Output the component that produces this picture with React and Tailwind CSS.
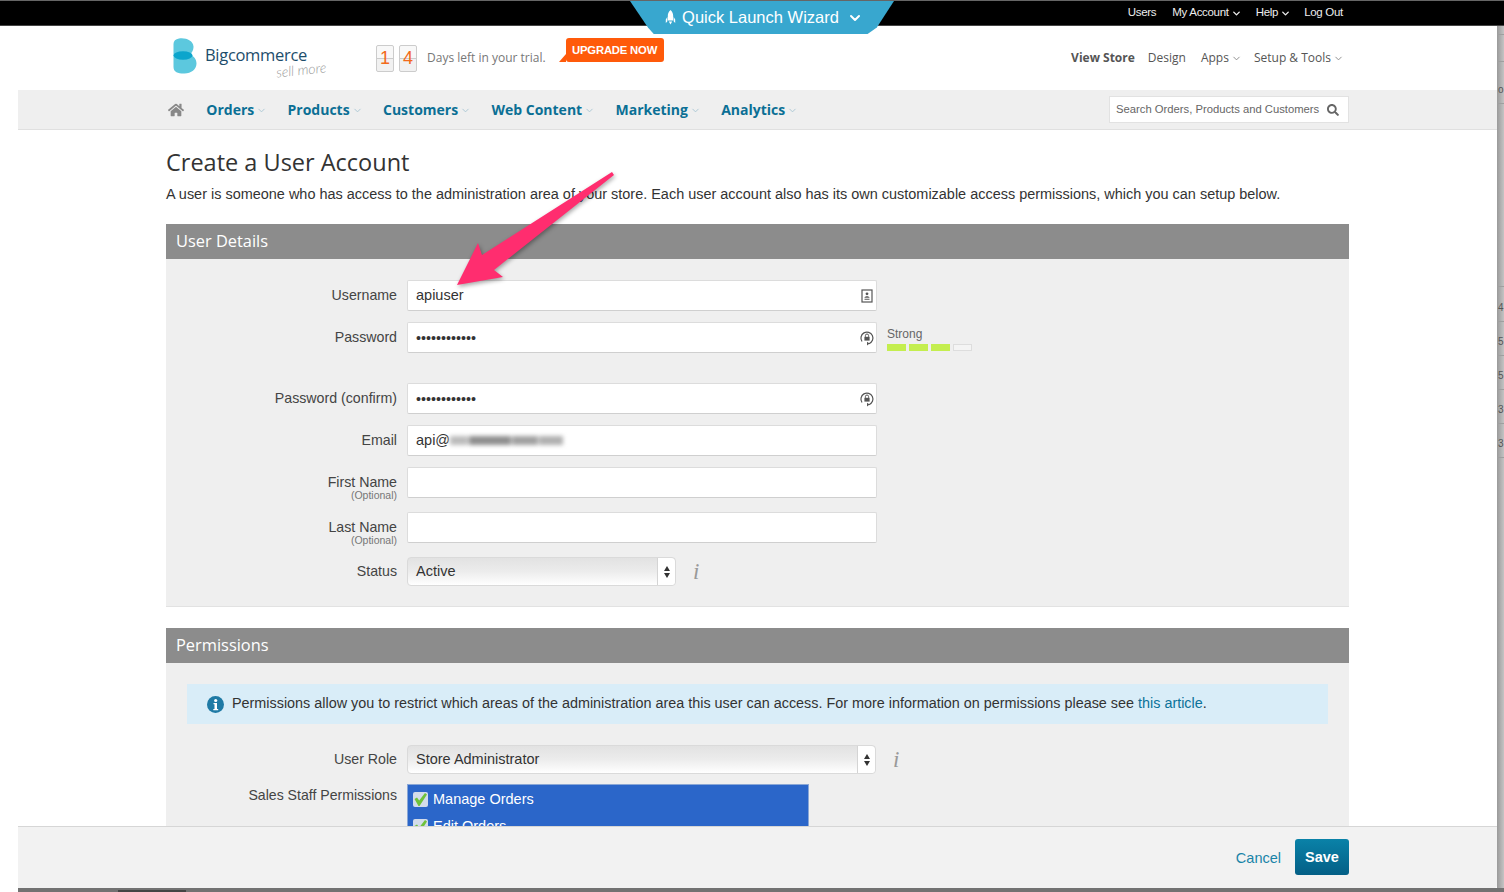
import React from 'react';
import { ChevronDown } from 'lucide-react';
import { FaHome, FaSearch } from 'react-icons/fa';

const helv = 'font-["Liberation_Sans",Arial,sans-serif]';

const stripRows = [
  ['h-[7px]', ''],
  ['h-[27px]', ''],
  ['h-[42px]', 'o'],
  ['h-[183px]', ''],
  ['h-[35px]', '4'],
  ['h-[34px]', '5'],
  ['h-[34px]', '5'],
  ['h-[34px]', '3'],
  ['h-[34px]', '3'],
];

function Caret({ className = '', strokeWidth = 2 }) {
  return <ChevronDown size={11} strokeWidth={strokeWidth} className={className} />;
}

function NavItem({ label }) {
  return (
    <div className="flex items-center gap-[2px]">
      <span className="text-[14px] font-bold text-[#0b6f95]">{label}</span>
      <Caret className="mt-[2px] text-[#a9c6d3]" />
    </div>
  );
}

function Field({ label, optional, height = 'h-[31px]', labelTop = 'pt-[6px]', className = '', children }) {
  return (
    <div className={`flex ${height} ${className}`}>
      <div className={`w-[231px] ${labelTop} text-right text-[14.2px] leading-[18px] text-[#444] ${helv}`}>
        {label}
        {optional && <div className="text-[10.5px] leading-[9px] text-[#777]">(Optional)</div>}
      </div>
      <div className="ml-[10px] flex">{children}</div>
    </div>
  );
}

function TextBox({ value, icon, children }) {
  return (
    <div className={`flex h-[31px] w-[470px] items-center justify-between rounded-[2px] border border-[#dcdcdc] border-b-[#cfcfcf] bg-white pl-[8px] text-[14.5px] text-[#333] ${helv}`}>
      <span className="flex items-center">{value}{children}</span>
      {icon}
    </div>
  );
}

function Dots() {
  return <span className="text-[14.3px] leading-[14px] text-[#333]">••••••••••••</span>;
}

function LockIcon() {
  return (
    <svg width="16" height="16" viewBox="0 0 16 16" className="mr-[1px] text-[#555]">
      <path d="M3 11.5A6 6 0 1 1 10 13.7" fill="none" stroke="currentColor" strokeWidth="1.2" />
      <path d="M8 15.5l2.6-2-2.6-1.8z" fill="currentColor" />
      <rect x="5.4" y="6.8" width="5.2" height="3.8" fill="currentColor" />
      <path d="M6.4 6.8V5.6a1.6 1.6 0 0 1 3.2 0v1.2" fill="none" stroke="currentColor" strokeWidth="1" />
    </svg>
  );
}

function ContactIcon() {
  return (
    <svg width="12" height="14" viewBox="0 0 12 14" className="mr-[3px] text-[#555]">
      <rect x="1" y="1" width="10" height="12" fill="none" stroke="currentColor" strokeWidth="1.2" />
      <circle cx="6" cy="4.8" r="1.4" fill="currentColor" />
      <path d="M3.5 8.8c0-2 5-2 5 0zM3.5 9.8h5v1h-5z" fill="currentColor" />
    </svg>
  );
}

function SelectBox({ value, width }) {
  return (
    <div className={`flex h-[29px] ${width} rounded-[4px] border border-[#dadada] bg-gradient-to-b from-[#e2e2e2] via-[#ececec] to-white text-[14.5px] text-[#333] ${helv}`}>
      <span className="flex-1 pl-[8px] leading-[27px]">{value}</span>
      <span className="flex w-[18px] flex-col items-center justify-center gap-[2px] rounded-r-[4px] border-l border-[#d4d4d4] bg-white">
        <span className="h-0 w-0 border-x-[3.5px] border-b-[5px] border-x-transparent border-b-[#333]" />
        <span className="h-0 w-0 border-x-[3.5px] border-t-[5px] border-x-transparent border-t-[#333]" />
      </span>
    </div>
  );
}

function InfoI() {
  return <span className='ml-[17px] font-["Liberation_Serif",serif] text-[23px] italic leading-[29px] text-[#999]'>i</span>;
}

function Check() {
  return (
    <span className="flex h-[15px] w-[15px] items-center justify-center rounded-[2px] bg-[#d3dcea]">
      <svg width="15" height="15" viewBox="0 0 15 15">
        <path d="M1.5 7l2.500-1.500 2.200 3L12 1l2 1.500-7.500 11.500h-1z" fill="#6fc23a" />
      </svg>
    </span>
  );
}

function SectionHead({ title }) {
  return (
    <div className='flex h-[35px] items-center bg-[#8c8c8c] pl-[10px] font-["Open_Sans",sans-serif] text-[16.4px] text-white'>
      {title}
    </div>
  );
}

export default function App() {
  return (
    <div className="relative h-[892px] w-[1504px] overflow-hidden bg-white">
      {/* black account bar */}
      <div className={`flex h-[26px] items-center justify-end border-t border-b border-t-[#666] border-b-[#444] bg-black pr-[161px] text-[11.5px] tracking-[-0.3px] text-[#eee] ${helv}`}>
        <span className="mr-[16px]">Users</span>
        <span className="mr-[14px] flex items-center gap-[2px]">My Account <Caret strokeWidth={3} /></span>
        <span className="mr-[13px] flex items-center gap-[2px]">Help <Caret strokeWidth={3} /></span>
        <span>Log Out</span>
      </div>

      <div className="flex">
        <div className="w-[18px] shrink-0" />

        <div className="w-[1479px] shrink-0">
          {/* header */}
          <div className="flex h-[64px] pl-[155px] pr-[155px]">
            <svg width="24" height="36" viewBox="0 0 24 36" className="mt-[12px]">
              <path d="M6 .5c7-1 14 2 14.500 8 .2 3.500-1.500 6-3.500 8 4 1.500 6.500 5 6.500 9 0 6-6 10.500-13 10C5 35.500.5 34 .5 29V6C.5 3 2.500 1 6 .5z" fill="#5cc8de" />
              <ellipse cx="10" cy="17.500" rx="9.500" ry="4.200" fill="#0ba5cc" />
            </svg>
            <div className="relative ml-[8px] w-[124px]">
              <div className='mt-[21px] font-["Open_Sans",sans-serif] text-[16.500px] leading-[16px] tracking-[-0.3px] text-[#1d4d6b]'>Bigcommerce</div>
              <div className='absolute left-[71px] top-[37px] -rotate-6 whitespace-nowrap font-["Lato",sans-serif] text-[14px] italic font-light leading-[14px] text-[#999]'>sell more</div>
            </div>
            <div className='ml-[47px] mt-[19px] flex gap-[5px] font-["Liberation_Sans",sans-serif] text-[18px] text-[#f26a1b]'>
              <span className="flex h-[27px] w-[18px] items-center justify-center rounded-[2px] border border-[#ccc] bg-[linear-gradient(#f8f8f8_49%,#ccc_49%,#ccc_52%,#f1f1f1_52%)]">1</span>
              <span className="flex h-[27px] w-[18px] items-center justify-center rounded-[2px] border border-[#ccc] bg-[linear-gradient(#f8f8f8_49%,#ccc_49%,#ccc_52%,#f1f1f1_52%)]">4</span>
            </div>
            <div className='ml-[10px] mt-[21px] font-["Open_Sans",sans-serif] text-[12px] leading-[22px] text-[#777]'>Days left in your trial.</div>
            <div className="relative ml-[20px] mt-[12px] flex h-[24px] w-[98px] items-center justify-center rounded-[3px] bg-[#ff5a0a] pt-[1px] font-['Liberation_Sans',sans-serif] text-[11.300px] font-bold tracking-[-0.2px] text-white">
              UPGRADE NOW
              <span className="absolute -left-[7px] bottom-0 h-0 w-0 border-b-[8px] border-l-[7px] border-b-[#ff5a0a] border-l-transparent" />
            </div>
            <div className='ml-auto mr-[-2px] mt-[21px] flex h-[22px] items-center font-["Open_Sans",sans-serif] text-[12px] text-[#555]'>
              <span className="mr-[13px] font-bold">View Store</span>
              <span className="mr-[15px]">Design</span>
              <span className="mr-[12px] flex items-center gap-[2px]">Apps <Caret className="text-[#888]" /></span>
              <span className="flex items-center gap-[2px]">Setup &amp; Tools <Caret className="text-[#888]" /></span>
            </div>
          </div>

          {/* main nav */}
          <div className='flex h-[40px] items-center gap-[20.3px] border-b border-[#e0e0e0] bg-[#efefef] pl-[150px] pr-[148px] font-["Open_Sans",sans-serif]'>
            <FaHome size={16} className="mr-[2px] text-[#888]" />
            <NavItem label="Orders" />
            <NavItem label="Products" />
            <NavItem label="Customers" />
            <NavItem label="Web Content" />
            <NavItem label="Marketing" />
            <NavItem label="Analytics" />
            <div className={`ml-auto flex h-[27px] w-[240px] items-center justify-between border border-[#e2e2e2] bg-white pl-[6px] pr-[9px] text-[11.250px] text-[#666] ${helv}`}>
              <span>Search Orders, Products and Customers</span>
              <FaSearch size={12} className="text-[#666]" />
            </div>
          </div>

          {/* page body */}
          <div className="pl-[148px] pr-[148px]">
            <h1 className='mt-[14px] font-["Open_Sans",sans-serif] text-[23.5px] leading-[36px] text-[#333]'>Create a User Account</h1>
            <p className={`mt-[5px] whitespace-nowrap text-[14.460px] leading-[18px] text-[#333] ${helv}`}>
              A user is someone who has access to the administration area of your store. Each user account also has its own customizable access permissions, which you can setup below.
            </p>

            <div className="mt-[21px]">
              <SectionHead title="User Details" />
              <div className="h-[348px] border-b border-[#e2e2e2] bg-[#efefef] pt-[21px]">
                <Field label="Username">
                  <TextBox value="apiuser" icon={<ContactIcon />} />
                </Field>
                <Field label="Password" className="mt-[11px]">
                  <TextBox value={<Dots />} icon={<LockIcon />} />
                  <div className={`ml-[10px] text-[12px] leading-[14px] text-[#666] ${helv}`}>
                    <div className="pt-[5px]">Strong</div>
                    <div className="mt-[3px] flex gap-[3px]">
                      <span className="h-[7px] w-[19px] bg-[#c4ee4f]" />
                      <span className="h-[7px] w-[19px] bg-[#c4ee4f]" />
                      <span className="h-[7px] w-[19px] bg-[#c4ee4f]" />
                      <span className="h-[7px] w-[19px] border border-[#ddd] bg-[#f4f4f4]" />
                    </div>
                  </div>
                </Field>
                <Field label="Password (confirm)" className="mt-[30px]">
                  <TextBox value={<Dots />} icon={<LockIcon />} />
                </Field>
                <Field label="Email" className="mt-[11px]">
                  <TextBox value="api@">
                    <span className="flex h-[9px] w-[116px] items-center gap-[1px] blur-[2px]">
                      <span className="h-[9px] w-[18px] bg-[#bbb]" />
                      <span className="h-[9px] w-[42px] bg-[#8e8e8e]" />
                      <span className="h-[9px] w-[26px] bg-[#a0a0a0]" />
                      <span className="h-[9px] w-[24px] bg-[#b0b0b0]" />
                    </span>
                  </TextBox>
                </Field>
                <Field label="First Name" optional className="mt-[11px]">
                  <TextBox value="" />
                </Field>
                <Field label="Last Name" optional className="mt-[14px]">
                  <TextBox value="" />
                </Field>
                <Field label="Status" height="h-[29px]" labelTop="pt-[5px]" className="mt-[14px]">
                  <SelectBox value="Active" width="w-[269px]" />
                  <InfoI />
                </Field>
              </div>
            </div>

            <div className="mt-[21px]">
              <SectionHead title="Permissions" />
              <div className="h-[300px] bg-[#efefef] pl-[21px] pr-[21px] pt-[21px]">
                <div className={`flex h-[40px] items-center bg-[#d9edf8] pl-[20px] text-[14.380px] text-[#333] ${helv}`}>
                  <svg width="17" height="17" viewBox="0 0 17 17" className="mr-[8px]">
                    <circle cx="8.500" cy="8.500" r="8.500" fill="#1f7aa5" />
                    <circle cx="8.700" cy="4.500" r="1.600" fill="#fff" />
                    <path d="M6.500 7h3.500v6h1.200v1.300H6.300V13h1.200V8.300h-1z" fill="#fff" />
                  </svg>
                  <span>
                    Permissions allow you to restrict which areas of the administration area this user can access. For more information on permissions please see{' '}
                    <span className="text-[#0b7299]">this article</span>.
                  </span>
                </div>
                <div className="-ml-[21px] mt-[21px]">
                  <Field label="User Role" height="h-[29px]" labelTop="pt-[5px]">
                    <SelectBox value="Store Administrator" width="w-[469px]" />
                    <InfoI />
                  </Field>
                  <div className="mt-[10px] flex">
                    <div className={`w-[231px] pt-[2px] text-right text-[14.100px] leading-[18px] text-[#444] ${helv}`}>Sales Staff Permissions</div>
                    <div className={`ml-[10px] h-[80px] w-[402px] border border-[#8aa7d6] bg-[#2b66c9] pl-[5px] pt-[7px] text-[14.500px] leading-[15px] text-white ${helv}`}>
                      <div className="flex items-center gap-[5px]"><Check /> Manage Orders</div>
                      <div className="mt-[12px] flex items-center gap-[5px]"><Check /> Edit Orders</div>
                    </div>
                  </div>
                </div>
              </div>
            </div>
          </div>
        </div>

        {/* sliver of the window behind */}
        <div className="h-[866px] w-[7px] shrink-0 bg-gradient-to-r from-[#9a9a9a] to-[#c4c4c4]">
          {stripRows.map(([height, glyph], i) => (
            <div key={i} className={`${height} flex items-end overflow-hidden border-b border-[#9f9f9f] pb-[8px] pl-[1px] text-[10px] leading-[10px] text-[#555] ${helv}`}>
              {glyph}
            </div>
          ))}
        </div>
      </div>

      {/* sticky save bar */}
      <div className={`absolute left-[18px] top-[826px] flex h-[62px] w-[1479px] items-start justify-end rounded-br-[3px] border-t border-[#d6d6d6] bg-[#f2f2f2] pr-[148px] pt-[12px] ${helv}`}>
        <span className="mr-[14px] mt-[9px] text-[14.500px] text-[#1a84a8]">Cancel</span>
        <span className="flex h-[36px] w-[54px] items-center justify-center rounded-[3px] bg-gradient-to-b from-[#0a82a8] to-[#045f86] pt-[1px] text-[14.500px] font-bold text-white">Save</span>
      </div>
      <div className="absolute left-[18px] top-[888px] h-[4px] w-[1486px] bg-[#727272]">
        <div className="ml-[100px] mt-[2px] h-[2px] w-[68px] bg-[#444]" />
      </div>

      {/* quick launch tab */}
      <div className={`absolute left-[630px] top-[1px] flex h-[33px] w-[264px] items-center justify-center bg-[#38a7cf] pl-[4px] text-[16.500px] text-white [clip-path:polygon(0_0,100%_0,93.5%_80%,90%_100%,9%_100%,6.8%_80%)] ${helv}`}>
        <svg width="11" height="15" viewBox="0 0 11 15" className="mr-[6px]">
          <path d="M5.500 0C3.700 1.500 2.800 3.500 2.800 6v4.500h5.400V6C8.200 3.500 7.300 1.500 5.500 0zM2.300 7L.8 9.500V13l1.500-1.500zM8.700 7l1.500 2.500V13l-1.500-1.500zM3.800 11.500h3.400L5.500 14.500z" fill="#fff" />
        </svg>
        Quick Launch Wizard
        <ChevronDown size={16} strokeWidth={3} className="ml-[8px]" />
      </div>

      {/* annotation arrow */}
      <svg width="200" height="150" viewBox="0 0 200 150" className="absolute left-[440px] top-[160px] drop-shadow-[1px_2px_2px_rgba(0,0,0,0.35)]">
        <path d="M172 12L174 15L54 110L63 117L17 125L38 83L42 95Z" fill="#ff2d6f" />
      </svg>
    </div>
  );
}
